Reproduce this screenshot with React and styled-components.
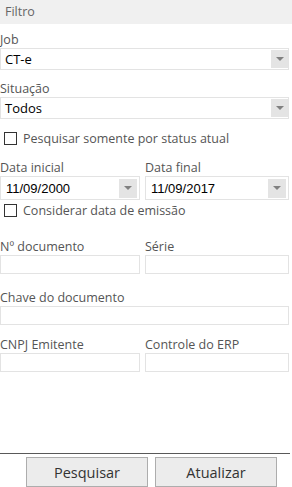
import React from "react";
import styled, { createGlobalStyle } from "styled-components";

const GlobalStyle = createGlobalStyle`
  html, body {
    margin: 0;
    padding: 0;
    background: #ffffff;
  }
  body {
    font-family: "Open Sans", "Noto Sans", Arial, sans-serif;
  }
`;

const Panel = styled.section`
  width: 292px;
  height: 487px;
  display: flex;
  flex-direction: column;
  background: #fff;
  overflow: hidden;
`;

const Header = styled.header`
  height: 24px;
  background: #f0f0f0;
  color: #666;
  font-size: 12.5px;
  line-height: 24px;
  padding-left: 5px;
`;

const Body = styled.div`
  flex: 1;
  width: 289px;
  display: flex;
  flex-direction: column;
`;

const Label = styled.div`
  height: 16px;
  line-height: 16px;
  font-size: 12.5px;
  color: #555;
  margin-top: ${(p) => p.$top || 0}px;
  white-space: nowrap;
`;

const Row = styled.div`
  display: flex;
  gap: 5px;
`;

const Col = styled.div`
  flex: ${(p) => (p.$first ? "0 0 140px" : "1")};
  min-width: 0;
  display: flex;
  flex-direction: column;
`;

const Box = styled.div`
  box-sizing: border-box;
  height: ${(p) => p.$h || 19}px;
  border: 1px solid #e3e3e3;
  background: #fff;
  display: flex;
  align-items: center;
  color: #000;
`;

const Value = styled.span`
  flex: 1;
  padding-left: ${(p) => (p.$mono ? 5 : 4)}px;
  font-family: ${(p) =>
    p.$mono ? `"Liberation Sans", Arial, sans-serif` : `"Open Sans", "Noto Sans", sans-serif`};
  font-size: 13px;
  color: #000;
  white-space: nowrap;
`;

const Arrow = styled.span`
  width: ${(p) => p.$w || 17}px;
  height: ${(p) => p.$h || 18}px;
  margin-right: ${(p) => p.$gap || 0}px;
  background: #e4e4e4;
  display: flex;
  align-items: center;
  justify-content: center;

  &::after {
    content: "";
    border-left: 4px solid transparent;
    border-right: 4px solid transparent;
    border-top: 4px solid #808080;
  }
`;

const Check = styled.label`
  display: flex;
  align-items: center;
  gap: 6px;
  height: 21px;
  padding-left: 4px;
  margin-top: ${(p) => p.$top || 0}px;
  font-size: 12.5px;
  color: #555;
  white-space: nowrap;
`;

const CheckBox = styled.span`
  box-sizing: border-box;
  width: 13px;
  height: 13px;
  border: 1px solid #333;
  background: #fff;
`;

const Footer = styled.footer`
  width: 290px;
  border-top: 1px solid #595959;
  height: 34px;
  display: flex;
  justify-content: flex-end;
  align-items: flex-start;
  gap: 7px;
  padding: 3px 13px 0 0;
  box-sizing: border-box;
`;

const Button = styled.button`
  box-sizing: border-box;
  width: 122px;
  height: 30px;
  background: #ececec;
  border: 1px solid #adadad;
  border-radius: 0;
  font-family: "Open Sans", "Noto Sans", sans-serif;
  font-size: 14.5px;
  color: #333;
  padding: 0;
`;

function Select({ value }) {
  return (
    <Box $h={22}>
      <Value>{value}</Value>
      <Arrow />
    </Box>
  );
}

function DateField({ value }) {
  return (
    <Box $h={24}>
      <Value $mono>{value}</Value>
      <Arrow $w={18} $h={19} $gap={2} />
    </Box>
  );
}

export default function App() {
  return (
    <>
      <GlobalStyle />
      <Panel>
        <Header>Filtro</Header>
        <Body>
          <Label $top={8}>Job</Label>
          <Select value="CT-e" />
          <Label $top={11}>Situação</Label>
          <Select value="Todos" />
          <Check $top={9}>
            <CheckBox />
            Pesquisar somente por status atual
          </Check>
          <Row>
            <Col $first>
              <Label $top={11}>Data inicial</Label>
              <DateField value="11/09/2000" />
            </Col>
            <Col>
              <Label $top={11}>Data final</Label>
              <DateField value="11/09/2017" />
            </Col>
          </Row>
          <Check>
            <CheckBox />
            Considerar data de emissão
          </Check>
          <Row>
            <Col $first>
              <Label $top={18}>Nº documento</Label>
              <Box />
            </Col>
            <Col>
              <Label $top={18}>Série</Label>
              <Box />
            </Col>
          </Row>
          <Label $top={16}>Chave do documento</Label>
          <Box />
          <Row>
            <Col $first>
              <Label $top={12}>CNPJ Emitente</Label>
              <Box />
            </Col>
            <Col>
              <Label $top={12}>Controle do ERP</Label>
              <Box />
            </Col>
          </Row>
        </Body>
        <Footer>
          <Button>Pesquisar</Button>
          <Button>Atualizar</Button>
        </Footer>
      </Panel>
    </>
  );
}
